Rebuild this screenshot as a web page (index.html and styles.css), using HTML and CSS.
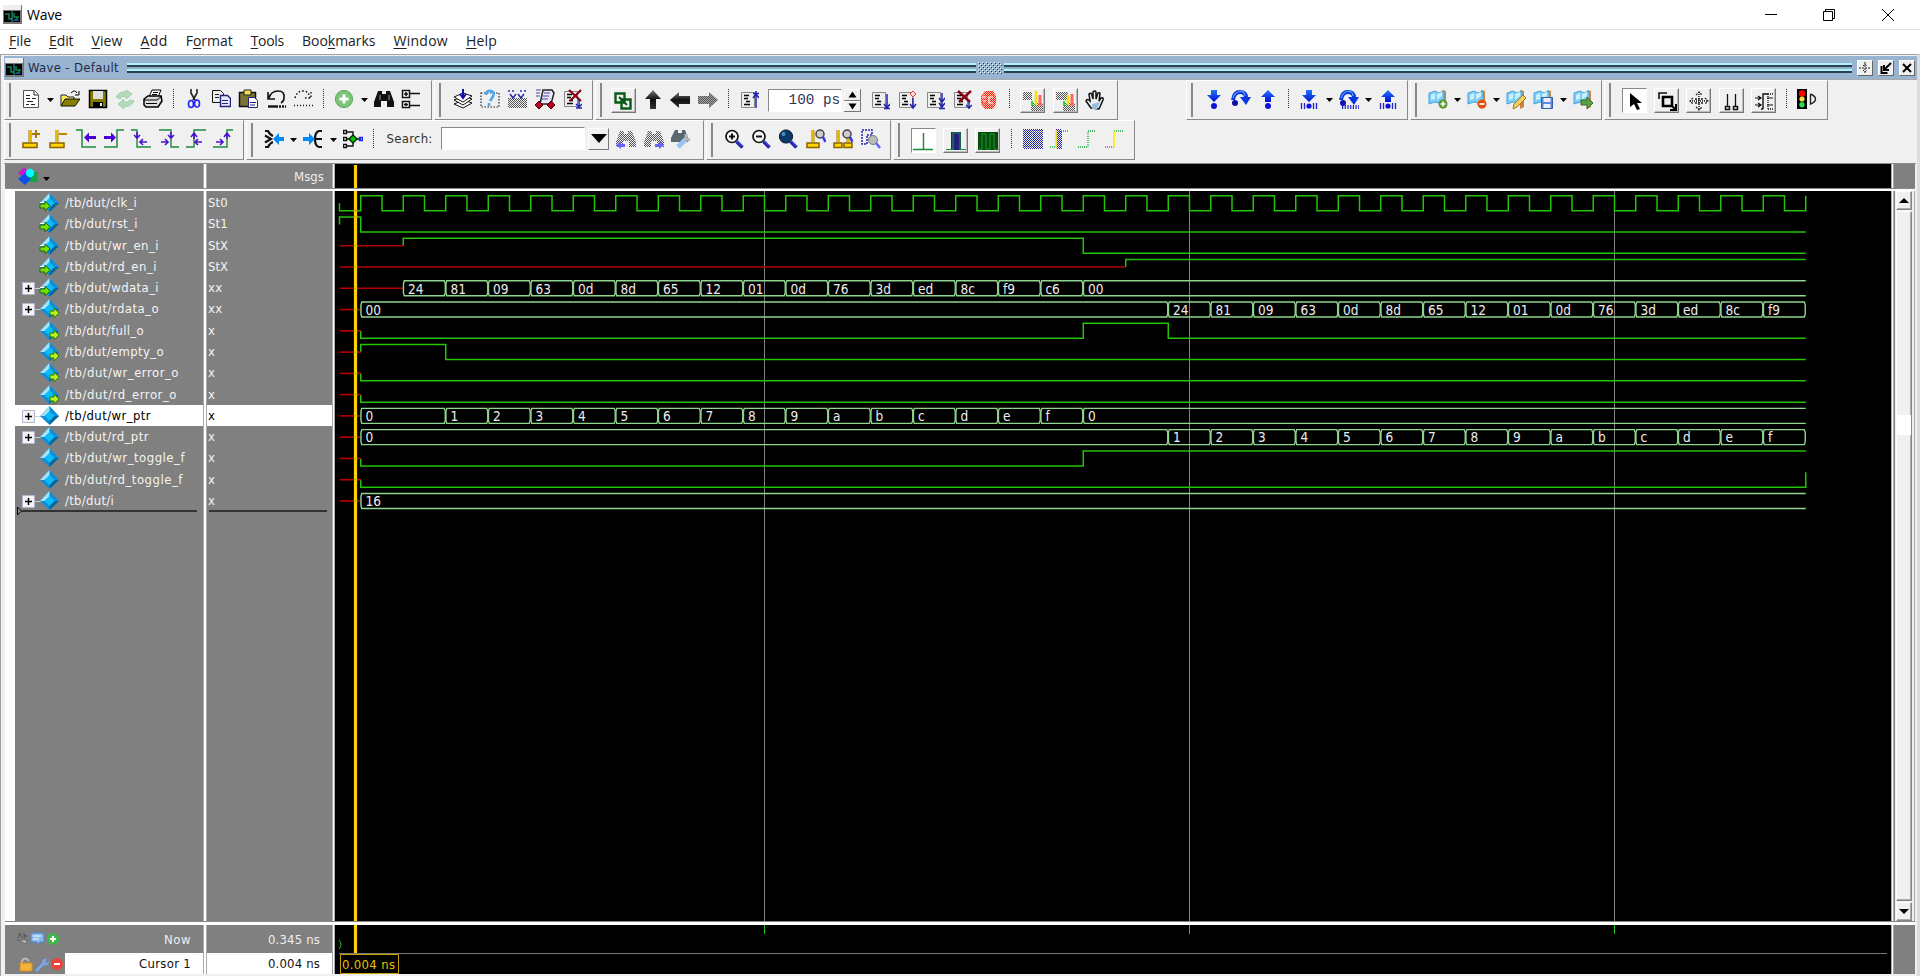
FILE: index.html
```html
<!DOCTYPE html>
<html lang="en">
<head>
<meta charset="utf-8">
<title>Wave</title>
<link rel="stylesheet" href="styles.css">
</head>
<body>
<div class="window">
  <header class="titlebar">
    <svg class="appicon" viewBox="0 0 19 19"><use href="#app"/></svg>
    <span class="fit" data-w="35">Wave</span>
    <div class="winbtns">
      <svg viewBox="0 0 14 14"><path d="M2 6.5h12"/></svg>
      <svg viewBox="0 0 14 14"><path d="M1.5 3.5h9v9h-9zM3.5 3.500v-2h9v9h-2"/></svg>
      <svg viewBox="0 0 14 14"><path d="M1 1l12 12M13 1L1 13"/></svg>
    </div>
  </header>
  <nav class="menu">
    <span class="fit" data-w="22"><u>F</u>ile</span>
    <span class="fit" data-w="24.5"><u>E</u>dit</span>
    <span class="fit" data-w="31"><u>V</u>iew</span>
    <span class="fit" data-w="27.2"><u>A</u>dd</span>
    <span class="fit" data-w="47"><span>F</span><u>o</u>rmat</span>
    <span class="fit" data-w="33.3"><u>T</u>ools</span>
    <span class="fit" data-w="73.5">Boo<u>k</u>marks</span>
    <span class="fit" data-w="54.5"><u>W</u>indow</span>
    <span class="fit" data-w="31"><u>H</u>elp</span>
  </nav>
  <main class="frame">
    <div class="panebar">
      <svg class="appicon" viewBox="0 0 19 19"><use href="#app"/></svg>
      <span class="fit tah" data-w="91">Wave - Default</span>
      <div class="rails"></div>
      <svg class="dots" viewBox="0 0 24 12"><rect width="24" height="12" fill="url(#griph)"/></svg>
      <div class="rails"></div>
      <div class="panebtns">
        <span class="pbtn"><svg viewBox="0 0 12 12"><path d="M6 0v12M0 6h12M4 4l2-2 2 2M4 8l2 2 2-2" stroke="#222" stroke-dasharray="2 1" fill="none"/></svg></span>
        <span class="pbtn"><svg viewBox="0 0 12 12"><path d="M1.500 4v7h6M11 1L5 7M4 3v5h5" stroke="#000" stroke-width="2" fill="none"/></svg></span>
        <span class="pbtn"><svg viewBox="0 0 12 12"><path d="M2 2l8 8M10 2l-8 8" stroke="#000" stroke-width="2" fill="none"/></svg></span>
      </div>
    </div>
    <div class="toolrow">
      <div class="group g1" data-items="doc v open save refresh print | cut copy paste undo redo | plus v binoc struct"></div>
      <div class="group g2" data-items="layers query reload runlog breaklist"></div>
      <div class="group g3" data-items="[link up left rightd | steptop #run listdown listdiamond listdouble listx stop | [perf [mem hand"></div>
      <div class="group g4" data-items="sin sover sout | sinb v soverb v soutb"></div>
      <div class="group g5" data-items="bkadd v bkdel v bkedit bksave v bkgo"></div>
      <div class="group g6" data-items="]pointer [zoomsel [pan [cursors [edges | traffic"></div>
    </div>
    <div class="toolrow">
      <div class="group ga" data-items="curadd curdel prevtr nexttr prevfall nextfall prevrise nextrise"></div>
      <div class="group gb" data-items="drivers v readers v expand | #search sleft sright sopt"></div>
      <div class="group gc" data-items="zin zout zfull zcur zcurs zlast"></div>
      <div class="group gd" data-items="]w1 [w2 [w3 | w4 w5 w6 w7"></div>
    </div>
    <section class="panes">
      <div class="namehead"><svg viewBox="0 0 34 20"><path d="M7 1l6 6-6 5-6-5z" fill="#c21bd0"/><path d="M11 6h10v10H11z" fill="#18a548"/><path d="M8 7l6 6-6 6-7-6z" fill="#0a50e8"/><circle cx="13" cy="7" r="4.200" fill="#0ff"/><path d="M26 11h7l-3.500 4z"/></svg></div>
      <div class="vsep"></div>
      <div class="msghead tah"><span class="fit" data-w="30">Msgs</span></div>
      <div class="vsep"></div>
      <svg class="black" viewBox="335 164 1556 24"><path d="M355.500 165v23" class="cursor"/></svg>
      <div class="vsep"></div>
      <div class="gray"></div>
      <div class="hsep"></div>
      <div class="names tah" id="names"></div>
      <div class="vsep"></div>
      <div class="values tah" id="values"></div>
      <div class="vsep"></div>
      <svg class="black" id="wave" viewBox="335 191 1556 730"></svg>
      <div class="vsep"></div>
      <div class="scroll">
        <div class="sbtn"><svg viewBox="0 0 10 6"><path d="M5 0l5 5H0z"/></svg></div>
        <div class="trough"><div class="mark"></div></div>
        <div class="sbtn"><svg viewBox="0 0 10 6"><path d="M0 0h10L5 5z"/></svg></div>
      </div>
      <div class="hsep"></div>
      <div class="foot tah">
        <div class="footrow"><svg viewBox="0 0 48 16"><path d="M2 7l2-5 2 5M8 2v5l3-2-3-1" stroke="#555" fill="none"/><path d="M1 9h11l-3 4-3-2z" fill="#bbb" stroke="#666"/><path d="M15 2h13v9h-4l-3 3v-3h-6z" fill="#8bb8ea" stroke="#4d83c4"/><path d="M17 5h8M17 8h6" stroke="#fff"/><circle cx="37" cy="8" r="6" fill="#43b649"/><path d="M37 5v6M34 8h6" stroke="#fff" stroke-width="2"/></svg><span class="fit" data-w="27">Now</span></div>
        <div class="footrow"><svg viewBox="0 0 48 16"><path d="M6 8V5q3-5 7 0" fill="none" stroke="#bbb" stroke-width="2"/><path d="M4 7h12v8H4z" fill="#f3b13e" stroke="#d58a1a"/><path d="M19 14l7-7q0-5 5-4l-2 3 2 1 2-2q0 5-5 4l-7 7z" fill="#7aa7ea"/><circle cx="41" cy="8" r="6" fill="#e8453c"/><path d="M38 8h6" stroke="#fff" stroke-width="2"/></svg><span class="cell"><span class="fit" data-w="52">Cursor 1</span></span></div>
      </div>
      <div class="vsep"></div>
      <div class="footvals tah">
        <div class="footrow"><span class="fit" data-w="52">0.345 ns</span></div>
        <div class="footrow lit"><span class="fit" data-w="52">0.004 ns</span></div>
      </div>
      <div class="vsep"></div>
      <svg class="black" viewBox="335 925 1556 49">
        <path d="M355.500 925v28" class="cursor"/>
        <path d="M339 953.500h1548" stroke="#777" fill="none"/>
        <path d="M764.500 925v9M1189.500 925v9M1614.500 925v9M339 940q4 5 0 9" stroke="#1fc31f" fill="none"/>
        <path d="M340.500 954.500h58v19h-58z" stroke="#c9a200" fill="#000"/>
        <text x="342" y="969" class="ctime" textLength="53">0.004 ns</text>
      </svg>
      <div class="vsep"></div>
      <div class="gray"></div>
    </section>
  </main>
</div>
<svg class="defs" id="defs">
  <defs>
    <pattern id="griph" width="4" height="4" patternUnits="userSpaceOnUse"><path d="M0 0h1v1h-1zM2 2h1v1h-1z" fill="#dff"/><path d="M1 1h1v1h-1zM3 3h1v1h-1z" fill="#234"/></pattern>
    <pattern id="dith" width="2" height="2" patternUnits="userSpaceOnUse"><path d="M0 0h1v1H0zM1 1h1v1H1z" fill="#555"/></pattern>
    <pattern id="dithb" width="2" height="2" patternUnits="userSpaceOnUse"><path d="M0 0h1v1H0zM1 1h1v1H1z" fill="#22229a"/></pattern>
    <pattern id="dithr" width="2" height="2" patternUnits="userSpaceOnUse"><path d="M0 0h2v2H0z" fill="#fba"/><path d="M0 0h1v1H0zM1 1h1v1H1z" fill="#f21"/></pattern>
    <linearGradient id="bl" x2="0" y2="1"><stop offset="0" stop-color="#27f"/><stop offset="1" stop-color="#01c"/></linearGradient>
    <linearGradient id="dk" x2="0" y2="1"><stop offset="0" stop-color="#777"/><stop offset=".5" stop-color="#111"/><stop offset="1" stop-color="#333"/></linearGradient>
    <symbol id="app" viewBox="0 0 19 19"><path d="M0 0h19v19H0z" fill="#777"/><path d="M0 0h18v5H0z" fill="#eee"/><path d="M1 6h16v11H1z"/><path d="M2 9h4v5h3M11 8v4h5M11 15h3v-3" stroke="#0a8a52" fill="none" stroke-width="1.500"/><path d="M9 6v11" stroke="#2aa" /><path d="M10 15.500h6" stroke="#33a"/></symbol>
  </defs>
</svg>
<script src="app.js"></script>
</body>
</html>
```
FILE: styles.css
```css
* { box-sizing: border-box; }
body { margin: 0; background: #f0f0f0; font-family: "Open Sans", "Noto Sans", sans-serif; color: #000; overflow: hidden; }
.window { width: 1920px; height: 976px; display: flex; flex-direction: column; }
.defs { position: absolute; width: 0; height: 0; }
.fit { white-space: pre; }
.tah { font-family: "DejaVu Sans Condensed", "DejaVu Sans", sans-serif; font-size: 13px; }
.titlebar { height: 30px; flex: none; background: #fff; border-bottom: 1px solid #e2e2e2; display: flex; align-items: center; padding-left: 3px; gap: 5px; font-size: 14px; }
.appicon { width: 19px; height: 19px; flex: none; }
.winbtns { margin-left: auto; display: flex; gap: 45px; padding-right: 25px; }
.winbtns svg { width: 14px; height: 14px; fill: none; stroke: #000; }
.menu { height: 24px; flex: none; background: #fff; display: flex; align-items: center; gap: 18px; padding: 0 0 2px 9px; font-size: 14px; line-height: 22px; color: #222; }
.menu u { text-underline-offset: 2px; }
.frame { flex: 1; display: flex; flex-direction: column; border: solid #a0a0a0; border-width: 1px 3px 0 1px; padding-left: 3px; border-right-color: #dcdcdc; }
.panebar { height: 24px; flex: none; margin-top: 1px; background: #99b4d1; display: flex; align-items: center; padding-left: 1px; border-bottom: 1px solid #aaa; }
.panebar .fit { margin: 0 8px 0 4px; color: #1c2c44; }
.rails { flex: 1; height: 10px; background: linear-gradient(#aef0fb 0 2px, #2c4452 2px 4px, #8db0c4 4px 6px, #aef0fb 6px 8px, #2c4452 8px); }
.dots { width: 24px; height: 12px; margin: 0 2px; }
.panebtns { display: flex; gap: 5px; margin: 0 2px 0 5px; }
.pbtn { width: 16px; height: 16px; background: #f0f0f0; border: 1px solid; border-color: #fff #666 #666 #fff; display: grid; place-items: center; }
.pbtn svg { width: 12px; height: 12px; }
.toolrow { height: 40px; flex: none; display: flex; gap: 2px; }
.group { flex: none; height: 40px; border: 1px solid; border-color: #fff #888 #888 #fff; display: flex; align-items: center; padding-bottom: 3px; background: linear-gradient(#888, #888) 4px 2px / 2px 34px no-repeat; }
.btn { width: 27.4px; flex: none; display: grid; place-items: center; }
.btn svg, .box svg { width: 20px; height: 20px; display: block; }
.drop { width: 12.4px; flex: none; display: grid; place-items: center; }
.drop svg { width: 7px; height: 4px; margin-top: 2px; }
.sep { width: 13.6px; flex: none; height: 20px; background: repeating-linear-gradient(#333 0 1px, transparent 1px 2px) center / 1px 100% no-repeat; }
.boxcell { width: 32.4px; flex: none; display: grid; place-items: center; }
.box { width: 25px; height: 25px; margin-top: 4px; border: 1px solid; border-color: #fff #777 #777 #fff; box-shadow: inset -1px -1px #bbb; display: grid; place-items: center; }
.box.down { background: #fff; border-color: #888 #fff #fff #888; box-shadow: none; }
.g1 { width: 428px; padding-left: 12px; }
.g2 { width: 159px; padding-left: 14px; }
.g3 { width: 523px; padding-left: 11px; }
.g3 .btn svg { margin-top: 2px; }
.g4 { width: 222px; padding-left: 13px; margin-left: 66px; }
.g4 .drop { width: 11.8px; }
.g5 { width: 192px; padding-left: 13px; }
.g5 .drop { width: 11.8px; }
.g6 { width: 224px; padding-left: 13px; }
.ga { width: 240px; padding-left: 13px; }
.gb { width: 458px; padding-left: 13px; }
.gc { width: 185px; padding-left: 13px; }
.gd { width: 242px; padding-left: 13px; }
.gd .sep { width: 15px; }
.runlen { display: flex; align-items: center; margin: 3px 5px 0 5.500px; }
.runbox { width: 74px; height: 23px; background: #fff; border: 1px solid; border-color: #888 #fff #fff #888; font: 14.3px/21px "Liberation Mono", monospace; text-align: right; padding-right: 1px; color: #335; white-space: pre; }
.spin { width: 17px; margin-left: 2px; }
.spin svg { width: 17px; height: 23px; display: block; }
.search { display: flex; align-items: center; padding-left: 6px; color: #333; margin-right: 3.500px; }
.searchbox { width: 144px; height: 23px; margin: 0 3px 0 8.500px; background: #fff; border: 1px solid; border-color: #888 #fff #fff #888; }
.combo { width: 21px; height: 22px; border: 1px solid; border-color: #fff #777 #777 #fff; display: grid; place-items: center; }
.combo svg { width: 16px; height: 9px; }
.panes { flex: 1; margin: 3px 1px 0 0; padding-left: 1px; border-top: 1px solid #888; display: grid; grid-template-columns: 198px 4px 125px 3px 1556px 3px 21px; grid-template-rows: 24px 3px 730px 4px 49px; background: #f0f0f0; }
.vsep { background: #fff; border-right: 1px solid #aaa; border-left: 1px solid #aaa; }
.hsep { grid-column: 1 / -1; background: #fff; border-top: 1px solid #888; }
.gray, .namehead, .msghead, .foot, .footvals { background: #808080; }
.black { background: #000; width: 1556px; height: 100%; display: block; }
.namehead { padding: 2px 0 0 12px; }
.namehead svg { width: 34px; height: 20px; }
.msghead { color: #eee; text-align: right; padding-right: 8px; line-height: 25px; }
.names { background: #808080; border-left: 10px solid #fff; padding-top: 1.500px; }
.values { background: #808080; padding-top: 1.500px; }
.row { height: 21.27px; display: flex; align-items: center; color: #f4f4f4; padding-bottom: 1px; }
.row.sel { background: #fff; color: #000; }
.names svg { width: 43px; height: 21px; margin: 0 6px 0 1px; flex: none; }
.values .row { padding-left: 1px; }
.names .insert { width: 182px; height: 10px; margin: -5px 0 0; display: block; }
.values .insert { height: 8px; border-top: 2px solid #333; margin: -1px 5px 0 2px; }
.cursor { stroke: #ffd200; stroke-width: 3.200; fill: none; }
.low { stroke: #22c404; fill: none; stroke-width: 1.500; }
.bus { stroke: #8fd48f; fill: none; stroke-width: 1.400; }
.unk { stroke: #b40000; fill: none; stroke-width: 1.600; }
.grid { stroke: #808080; fill: none; }
.val { font: 13.500px "DejaVu Sans Condensed", "DejaVu Sans", sans-serif; fill: #eee; }
.ctime { font: 13px "DejaVu Sans Condensed", "DejaVu Sans", sans-serif; fill: #e8c000; }
.foot .footrow, .footvals .footrow { display: flex; align-items: center; justify-content: flex-end; padding-right: 12px; color: #eee; height: 28px; }
.foot .footrow + .footrow, .footvals .footrow + .footrow { height: 21px; }
.foot svg { width: 48px; height: 16px; margin: 0 auto 0 11px; }
.foot .footrow + .footrow { padding-right: 0; }
.cell { width: 138px; height: 21px; background: #fff; color: #111; text-align: right; padding-right: 12px; line-height: 21px; }
.footvals .footrow.lit { background: #fff; color: #111; }
.scroll { display: flex; flex-direction: column; background: #f0f0f0; padding: 0 2px 0 1px; border-left: 1px solid #888; border-right: 1px solid #aaa; }
.sbtn { height: 19px; border: 1px solid; border-color: #fff #888 #888 #fff; box-shadow: inset -1px -1px #aaa; display: grid; place-items: center; }
.sbtn svg { width: 10px; height: 6px; }
.trough { flex: 1; border: 1px solid; border-color: #fff #888 #888 #fff; box-shadow: inset -1px -1px #aaa; margin: 1px 0; padding-top: 203px; }
.mark { height: 20px; background: #fff; }
```
FILE: app.js
```javascript
const P = (d, a = '') => `<path d="${d}" ${a}/>`;
const L = (d, c = '#000', w = 1, x = '') => P(d, `fill="none" stroke="${c}" stroke-width="${w}" ${x}`);
const page = P('M2.500 2.500h13v15h-13z', 'fill="#eee" stroke="#888"') + L('M5 5.500h5M5 8.500h4M7 11.500h4M5 14.500h6', '#000', 1.5);
const downA = 'M7 1h6v5h4l-7 7-7-7h4z', upA = 'M7 13h6V8h4l-7-7-7 7h4z';
const over = L('M2 11Q3 3 9 3T15 9', '#0636e0', 4) + L('M2 9Q4 3 9 2.500T14 7', '#6af', 1.2) + P('M9 8h11l-5 8z', 'fill="#0a38e0"') + '<circle cx="4" cy="14" r="3" fill="#11a"/>';
const flag = P('M14 1l4 1v16l-4 2z', 'fill="#c9863a"') + P('M1 4l6-2 4 2 5-2v11l-5 1-4-1-6 2z', 'fill="#7ccdf6" stroke="#48a4dc"') + P('M3 6l4-2v6l-4 1zM9 5l5-2v4l-5 4z', 'fill="#c8f0ff"');
const handle = L('M12.500 12.500l6 6', '#22a', 3.5) + L('M13 11.500l5.500 5.500', '#66f', 1);
const glass = '<circle cx="8" cy="7.500" r="6" fill="#f6f6f6" stroke="#111" stroke-width="1.700"/>' + handle;
const smallGlass = '<circle cx="14" cy="5" r="4" fill="#ccc" stroke="#444" stroke-width="1.500"/>' + L('M17 8l2.500 5', '#33e', 2.5);
const base = (x, w) => L(`M${x} 1v12`, '#a87800', 3) + L(`M${x} 1v12`, '#ffd400', 1.4) + P(`M${x - w / 2} 14h${w}v4.500h-${w}z`, 'fill="#ffd400" stroke="#8a6000" stroke-width="1.500"');
const arrL = (x, y) => L(`M${x} ${y}h7M${x + 3} ${y - 3}l-3 3 3 3`, '#4a12d0', 1.6);
const arrR = (x, y) => L(`M${x} ${y}h7M${x + 4} ${y - 3}l3 3-3 3`, '#4a12d0', 1.6);
const binoc = f => P('M4 2h4v3h4V2h4l4 11v5h-7v-6H7v6H0v-5z', `fill="${f}"`);
const G = '#1c8a3c', D = 'stroke-dasharray="1 1"';

const icons = {
  doc: P('M2.500 1.500h11l4 4v13h-15z', 'fill="#fff" stroke="#555"') + L('M13 2v4h4M5 6.500h4M5 9.500h4M11 9.500h4M6 12.500h6M5 15.500h3M10 15.500h4', '#222'),
  open: L('M11 4q4-4 6 0m2-2v4h-4') + P('M1 17V6h5l2 2h6v3', 'fill="#ffea60" stroke="#222"') + P('M1 17l4-7h15l-5 7z', 'fill="#8a8000" stroke="#111"'),
  save: P('M1.500 1.500h17v17h-17z', 'fill="#807a00" stroke="#000" stroke-width="1.500"') + P('M5 2h10v8H5z', 'fill="#ddd"') + P('M5 13h10v5H5z') + P('M12 14h2v3h-2z', 'fill="#eee"'),
  refresh: P('M1 8q4-6 10-5V1l6 4-6 5V7q-4 0-6 3zM19 12q-4 7-10 5v3l-6-5 6-5v3q4 1 6-2z', 'fill="#b4dcba" stroke="#8cc49a" stroke-width=".7"'),
  print: P('M6 8l3-7h9l-3 7z', 'fill="#fff" stroke="#000"') + P('M1 10l4-3h13l1 5-4 6H3l-2-2z', 'fill="#ddd" stroke="#000" stroke-width="1.500"') + L('M1 11h13l5-4M3 14.500h11M10 3.500h5M9 5.500h5'),
  cut: L('M7 0v4l4 7M13 0v4l-4 7', '#222', 1.6) + '<ellipse cx="7" cy="15" rx="2.500" ry="3.500" fill="none" stroke="#22f" stroke-width="1.600"/><ellipse cx="13" cy="14.500" rx="2.500" ry="3.500" fill="none" stroke="#22f" stroke-width="1.600"/>',
  copy: P('M1.500 1.500h8l3 3v9h-11z', 'fill="#eee" stroke="#111"') + P('M9.500 6.500h7l3 3v8h-10z', 'fill="#e8e8ff" stroke="#22227a" stroke-width="1.400"') + L('M4 5.500h4M4 8.500h4', '#111') + L('M11 11.500h6M11 14.500h6', '#22227a'),
  paste: P('M1.500 3.500h16v14h-16z', 'fill="#7b7432" stroke="#111" stroke-width="1.500"') + P('M6 1h7v5H6z', 'fill="#f0e050" stroke="#222"') + P('M10.500 8.500h6l3 3v7h-9z', 'fill="#fff" stroke="#22227a"') + L('M12 13.500h6M12 16h5', '#22227a'),
  undo: L('M3 9q2-7 9-7t6 7q0 3-3 5M2 3v7h7', '#111', 1.6) + L('M2 17.500h10', '#111', 2.4) + L('M13 17.500h7', '#111', 2.4, 'stroke-dasharray="2 1"'),
  redo: L('M2 9q2-7 8-7t7 7M18 3v6h-6', '#111', 1.4, 'stroke-dasharray="1.500 2"') + L('M1 16.500h19', '#111', 1.5, 'stroke-dasharray="1 2"'),
  plus: '<circle cx="10" cy="10" r="8.600" fill="#7cc67a" stroke="#5aa85a"/>' + L('M10 5.500v9M5.500 10h9', '#fff', 3),
  binoc: binoc('#111') + L('M6 6v5M15 6v5', '#999'),
  struct: P('M1.500 1.500h7v7h-7zM1.500 12.500h7v6h-7z', 'fill="#fff" stroke="#111" stroke-width="1.500"') + L('M3 5h4M5 3v4M3 15.500h4M5 14v3M9 4.500h10M9 16.500h10', '#111', 1.5),
  layers: P('M1 15l10-4 8 3-9 5z', 'fill="#fff" stroke="#111"') + P('M1 11l10-4 8 3-9 6z', 'fill="#fff" stroke="#111"') + P('M1 8l9-4 9 3-9 6z', 'fill="#fff" stroke="#111"') + L('M10 0v8M7 5l3 4 3-4', '#11a', 2),
  query: L('M1 4h18v14H1z', '#222', 1.2, 'stroke-dasharray="1.500 1.500"') + L('M6 6q0-5 5-4t1 7l-2 3M9 14v3', '#4aa8f0', 2.6),
  reload: '<rect x="1" y="9" width="19" height="10" fill="url(#dith)"/>' + L('M2 1v2M6 1v2M14 1v2M18 1v2M3 5l3 4 3-4M11 5l3 4 3-4', '#22a', 1.4),
  runlog: P('M8 1h9l2 3-3 11H5z', 'fill="#e8e8f8" stroke="#222" stroke-width="1.500"') + L('M9 4h6M8 7h6M7 10h6M1 1h5M1 4h4M1 7h4', '#44a') + P('M4 12l4 4-4 4-4-4zM16 12l4 4-4 4-4-4z', 'fill="#c00020" stroke="#400"'),
  breaklist: page + L('M7 1l12 11M19 1L8 12', '#8a0010', 2.2) + L('M17 10v9M14 15l3 3 3-3M14 19h6', '#22a', 1.4),
  link: P('M2.500 2.500h9v9h-9zM8.500 8.500h9v9h-9z', 'fill="none" stroke="#0a5a1a" stroke-width="2.400"') + L('M6 6l8 8', '#0a5a1a', 2),
  up: P('M7 19V9H2l8-9 8 9h-5v10z', 'fill="url(#dk)"'),
  left: P('M20 6H9V2L0 10l9 8v-4h11z', 'fill="url(#dk)"'),
  rightd: P('M0 6h11V2l9 8-9 8v-4H0z', 'fill="#a4a4a4"') + P('M0 6h11V2l9 8-9 8v-4H0z', 'fill="url(#dith)"'),
  steptop: page + L('M17 1v17M14 3.500h6M14 8l3-4 3 4', '#22a', 1.5),
  listdown: page + L('M17 4v14M14 14l3 4 3-4M14 18.500h6', '#22a', 1.5),
  listdiamond: page + P('M16 1l3 3-3 3-3-3z', 'fill="#fdd" stroke="#f33"') + L('M16 8v10M13 14l3 4 3-4', '#22a', 1.5),
  listdouble: page + L('M17 3v15M14 8l3 4 3-4M14 13l3 4 3-4M14 18.500h6', '#22a', 1.5),
  listx: page + L('M6 1l12 11M19 1L7 12', '#8a0010', 2.4) + L('M17 11v8M14 15l3 3 3-3', '#22a', 1.4),
  stop: P('M6 1h8l3 5v8l-3 5H6l-4-5V6z', 'fill="url(#dithr)"') + L('M3 7h4M4 11h3M14 7h-4v6h4', '#fff', 1.2),
  perf: '<rect x="0" y="1" width="9" height="8" fill="url(#dith)"/><rect x="8" y="12" width="12" height="8" fill="url(#dith)"/>' + L('M13 0v14', '#fd0', 2.5) + L('M17 4v11', '#f66', 3) + L('M9 10v5', '#2d4', 2),
  mem: '<rect x="1" y="1" width="12" height="8" fill="url(#dith)"/><rect x="8" y="12" width="12" height="8" fill="url(#dith)"/>' + L('M13 4v10', '#fd0', 2.5) + L('M17 3v12', '#f66', 3) + L('M9 10v5', '#2d4', 2),
  hand: P('M6 18L1 11q1-3 4 0L4 4q2-2 3 1l1 4V2q2-2 3 0v7l2-6q2-1 2 1l-1 7 2-3q3-1 2 2l-4 9z', 'fill="#eee" stroke="#111" stroke-width="1.500"') + P('M7 14l8-2-3 7H7z', 'fill="#9bd"'),
  sin: P(downA, 'fill="url(#bl)"') + '<circle cx="10" cy="17" r="3" fill="#11d"/>',
  sover: over,
  sout: P(upA, 'fill="url(#bl)"') + '<circle cx="10" cy="17" r="3" fill="#11d"/>',
  sinb: P(downA, 'fill="url(#bl)"') + '<circle cx="10" cy="17" r="2.600" fill="#11d"/>' + L('M2.500 14v6M5.500 14v6M14.500 14v6M17.500 14v6', '#22c', 1.3),
  soverb: over + L('M3 18h17', '#22c', 4, 'stroke-dasharray="1.200 1.500"'),
  soutb: P(upA, 'fill="url(#bl)"') + '<circle cx="10" cy="17" r="2.600" fill="#11d"/>' + L('M2.500 14v6M5.500 14v6M14.500 14v6M17.500 14v6', '#22c', 1.3),
  bkadd: flag + '<circle cx="15" cy="15" r="4.500" fill="#5a9a30"/>' + L('M15 12.500v5M12.500 15h5', '#fff', 1.7),
  bkdel: flag + '<circle cx="15" cy="15" r="4.500" fill="#e05010"/>' + L('M12.500 15h5', '#fff', 1.7),
  bkedit: flag + P('M17 6l3 3-9 9-4 2 1-5z', 'fill="#f3cf60" stroke="#a8761a"'),
  bksave: flag + P('M8.500 8.500h11v11h-11z', 'fill="#5b8ad8" stroke="#3560a8"') + P('M10.500 9h7v4h-7zM10.500 15h7v4h-7z', 'fill="#eef"'),
  bkgo: flag + P('M8 11h6V8l6 6-6 6v-4H8z', 'fill="#58a040" stroke="#386828"'),
  pointer: P('M6 2v14l4-3 3 6 3-1-3-6h5z'),
  zoomsel: L('M2 8V2h8', '#111', 1.6) + L('M6 6h9v9H6z', '#000', 2.6) + L('M14 14l4 4M13 19h6v-6', '#000', 2),
  pan: L('M10 1v18M1 10h18', '#111', 1.4, D) + L('M7 4l3-3 3 3M7 16l3 3 3-3M4 7l-3 3 3 3M16 7l3 3-3 3M6 8h8M6 12h8', '#222', 1.3, 'stroke-dasharray="2 1"'),
  cursors: L('M6.500 3v12M14.500 3v12', '#111', 1.3) + L('M4.500 15.500h4v3h-4zM12.500 15.500h4v3h-4z', '#111', 1.5),
  edges: L('M9 18V3h5M9 18H7', '#111', 1.4) + L('M14 3v15M14 18h6M14 3h6', '#111', 1.3, D) + L('M1 7h6M4 5l3 2-3 2M1 14h6M4 12l3 2-3 2M13 7h6M13 14h6', '#111', 1.2),
  traffic: P('M0 0h10v20H0z') + '<circle cx="5" cy="4.500" r="3.200" fill="red"/><circle cx="5" cy="10" r="2.600" fill="#f3e040"/><circle cx="5" cy="15.800" r="2.700" fill="#2d5"/>' + L('M13.500 5v10q5-2 5-5t-5-5', '#222', 1.4),
  curadd: base(8, 14) + L('M10 5h8M14 1v8', '#a87800', 2),
  curdel: base(8, 14) + L('M10 5h8', '#c08a00', 2),
  prevtr: L('M0 1h6v17h14', G, 1.5) + P('M8 8.500l5-5v3.500h7v3h-7v3.500z', 'fill="#4a00d8"'),
  nexttr: L('M0 18h13V1h7', G, 1.5) + P('M12 8.500l-5-5v3.500H0v3h7v3.500z', 'fill="#4a00d8"'),
  prevfall: L('M0 1h6v17h14', G, 1.4) + L('M6 3v5M3 6l3 3 3-3', '#4a12d0', 1.6) + arrL(9, 13),
  nextfall: L('M0 1h12v17h8', G, 1.4) + L('M12 3v5M9 6l3 3 3-3', '#4a12d0', 1.6) + arrR(2, 13),
  prevrise: L('M0 18h8V1h12', G, 1.4) + L('M8 4v6M5 8l3-4 3 4', '#4a12d0', 1.6) + arrL(9, 13),
  nextrise: L('M0 18h14V1h6', G, 1.4) + L('M14 4v6M11 8l3-4 3 4', '#4a12d0', 1.6) + arrR(3, 13),
  drivers: L('M1 2h3q2 4 5 5M1 18h3q2-4 5-5M1 6.500l6 3.500-6 3.500', '#111', 2.2) + P('M9 10l6-6v4h5v4h-5v4z', 'fill="#08f"'),
  readers: L('M19 2h-3q-4 1-4 8t4 8h3M19 10h-6', '#111', 2.2) + P('M12 10L6 4v4H0v4h6v4z', 'fill="#08f"'),
  expand: L('M4 3h6v4M4 17h6v-4M4 10h14', '#111', 1.4) + L('M.5 1.500h3v3h-3zM.5 8.500h3v3h-3zM.5 15.500h3v3h-3z', '#111', 1.3) + P('M10 6l4 4-4 4-4-4z', 'fill="#0c0" stroke="#030" stroke-width="1.500"') + L('M16.500 8.500h3v3h-3z', '#22f', 1.5),
  sleft: binoc('url(#dith)') + P('M0 16l5-4v3h4v3H5v2z', 'fill="#66f"'),
  sright: binoc('url(#dith)') + P('M20 16l-5-4v3h-4v3h4v2z', 'fill="#66f"'),
  sopt: P('M4 1h3v3h4V1h3l3 8v4H0V9z', 'fill="#5a6670"') + L('M7 18l8-8', '#9cc4f0', 5) + L('M15 5v5l4 1', '#b4b4b4', 3),
  zin: glass + L('M8 4.500v6M5 7.500h6', '#111', 2),
  zout: glass + L('M5 7.500h6', '#111', 2),
  zfull: '<circle cx="8" cy="7.500" r="6.600" fill="#0a3a6a" stroke="#112"/><circle cx="5.500" cy="5" r="2" fill="#4a90c0"/>' + handle,
  zcur: base(7, 12) + smallGlass,
  zcurs: base(5, 8) + base(15, 8) + smallGlass,
  zlast: L('M1 1h10v5H6v9H1z', '#22b', 1.5, 'stroke-dasharray="2 1"') + '<circle cx="12" cy="11" r="4.500" fill="#bbb" stroke="#777"/>' + L('M15 14l4 5', '#66f', 2.5),
  w1: L('M0 18.500h20M10.500 2v16', G, 1.4),
  w2: P('M5 1h10v18H5z', 'fill="#22227a"') + L('M0 18.500h7V2h7v16.500h6', G, 1.2),
  w3: P('M0 1h20v18H0z', 'fill="#064d0c"') + L('M1 18h3V3h4v15h4V3h4v15h3', '#1a9a2a'),
  w4: '<rect width="20" height="20" fill="url(#dithb)"/>' + L('M0 18h10V2h10', '#3b8', 1, D),
  w5: '<rect x="6" width="6" height="20" fill="url(#dithb)"/>' + L('M6 1v18', '#fe0', 1.6) + L('M0 18h6M9 2h9', '#2a4', 1.4, D),
  w6: L('M0 18h10V2h8', '#2a4', 1.3, D),
  w7: L('M0 18h9M9 2h9', '#2a4', 1.3, D) + L('M9 2v16', '#fe0', 1.6)
};

const svg = n => `<svg viewBox="0 0 20 20">${icons[n]}</svg>`;
const special = {
  '#run': '<div class="runlen"><div class="runbox">100 ps</div><div class="spin"><svg viewBox="0 0 17 23"><path d="M.5 11V.5H16M.5 22V12.500H16" stroke="#fff" fill="none"/><path d="M16.500 0v11.500H0M16.500 12v10.500H0" stroke="#777" fill="none"/><path d="M8.500 2.500l4 6h-8zM4.500 14.500h8l-4 6z"/></svg></div></div>',
  '#search': '<div class="search tah"><span class="fit" data-w="46">Search:</span><div class="searchbox"></div><div class="combo"><svg viewBox="0 0 16 9"><path d="M0 0h16L8 9z"/></svg></div></div>'
};
document.querySelectorAll('.group').forEach(g => {
  g.innerHTML = g.dataset.items.split(' ').map(t => {
    if (t === '|') return '<span class="sep"></span>';
    if (t === 'v') return '<span class="drop"><svg viewBox="0 0 7 4"><path d="M0 0h7L3.500 4z"/></svg></span>';
    if (special[t]) return special[t];
    if (t[0] === '[') return `<span class="boxcell"><span class="box">${svg(t.slice(1))}</span></span>`;
    if (t[0] === ']') return `<span class="boxcell"><span class="box down">${svg(t.slice(1))}</span></span>`;
    return `<span class="btn">${svg(t)}</span>`;
  }).join('');
});

// Signals: name, value, drawn width, expandable, direction
const signals = [
  ['clk_i', 'St0', 72, 0, 'i'], ['rst_i', 'St1', 73, 0, 'i'], ['wr_en_i', 'StX', 94, 0, 'i'], ['rd_en_i', 'StX', 92, 0, 'i'],
  ['wdata_i', 'xx', 94, 1, 'i'], ['rdata_o', 'xx', 94, 1, 'o'], ['full_o', 'x', 79, 0, 'o'], ['empty_o', 'x', 99, 0, 'o'],
  ['wr_error_o', 'x', 114, 0, 'o'], ['rd_error_o', 'x', 112, 0, 'o'], ['wr_ptr', 'x', 86, 1, ''], ['rd_ptr', 'x', 84, 1, ''],
  ['wr_toggle_f', 'x', 120, 0, ''], ['rd_toggle_f', 'x', 118, 0, ''], ['i', 'x', 49, 1, '']
];
const plusBox = '<path d="M6.500 5.500h12v12h-12z" fill="#f4f4f8" stroke="#b4b4cc"/><path d="M9 11.500h7M12.500 8v7" stroke="#000" stroke-width="1.500"/><path d="M19 11.500h7" stroke="#ccd"/>';
const gem = '<path d="M33.500 1l9.500 10-9.500 9-9.500-9z" fill="#0d8fd8"/><path d="M33.500 1v6l-5 4h-4.500z" fill="#a6e2fa"/><path d="M43 11l-9.500 9v-5l5-4z" fill="#06679c"/><path d="M33.500 6l5 5-5 5-5-5z" fill="#0abcf8"/>';
const dir = {
  i: '<path d="M24 12h5V9l5 5-5 5v-3h-5z" fill="#7be000" stroke="#1c6a10"/><path d="M24 10.500h4" stroke="#fff"/>',
  o: '<path d="M34 13h4v-3l5 5-5 5v-3h-4z" fill="#b8f020" stroke="#2c7a10"/>', '': ''
};
document.getElementById('names').innerHTML = signals.map(([n, , w, e, d]) =>
  `<div class="row${n === 'wr_ptr' ? ' sel' : ''}"><svg viewBox="0 0 43 21">${e ? plusBox : ''}${gem}${dir[d]}</svg><span class="fit" data-w="${w}">/tb/dut/${n}</span></div>`).join('') +
  '<svg class="insert" viewBox="0 0 182 10"><path d="M2.500 1v8l4-4z" fill="#888" stroke="#000"/><path d="M6 5h176" stroke="#333" stroke-width="2"/></svg>';
document.getElementById('values').innerHTML = signals.map(([n, v]) =>
  `<div class="row${n === 'wr_ptr' ? ' sel' : ''}"><span class="fit" data-w="${v.length === 3 ? 20 : v.length * 7.2}">${v}</span></div>`).join('') + '<div class="insert"></div>';

// Waveforms: one picosecond is 4.25px, time zero at 339.5
const X = t => 339.5 + t * 4.25, END = 345, hi = k => 195.7 + 21.27 * k, lo = k => hi(k) + 15, mid = k => hi(k) + 7.5;
let out = '';
[100, 200, 300].forEach(t => out += `<path class="grid" d="M${X(t)} 191v730"/>`);
const unk = (k, t) => out += `<path class="unk" d="M${X(0)} ${mid(k)}H${X(t)}"/>`;
function bit(k, start, level, edges) {
  const y = l => l ? hi(k) : lo(k);
  let d = `M${X(start)} ${mid(k)}V${y(level)}`;
  edges.forEach(t => { d += `H${X(t)}`; level = 1 - level; d += `V${y(level)}`; });
  out += `<path class="low" d="${d}H${X(END)}"/>`;
  if (start > 0) unk(k, start);
}
function bus(k, start, vals, endMark) {
  unk(k, start);
  vals.forEach(([t, v], i) => {
    const a = X(t), last = i + 1 === vals.length, b = X(last ? END : vals[i + 1][0]);
    const left = `h-1l-.8 3v9l.8 3h1`;
    if (last && !endMark) out += `<path class="bus" d="M${b} ${hi(k)}H${a + 2}${left}H${b}"/>`;
    else out += `<path class="bus" d="M${b - 1.5} ${hi(k)}H${a + 2}${left}H${b - 1.5}l1-3v-9z"/>`;
    out += `<text class="val" x="${a + 4.7}" y="${mid(k) + 5.3}">${v}</text>`;
  });
}
const data = '24 81 09 63 0d 8d 65 12 01 0d 76 3d ed 8c f9 c6'.split(' ');
const clk = []; for (let t = 5; t <= END; t += 5) clk.push(t);
bit(0, 0, 0, clk);
bit(1, 0, 1, [5]);
bit(2, 15, 1, [175]);
bit(3, 185, 1, []);
bus(4, 15, data.map((v, i) => [15 + 10 * i, v]).concat([[175, '00']]));
bus(5, 5, [[5, '00']].concat(data.slice(0, 15).map((v, i) => [195 + 10 * i, v])), true);
bit(6, 5, 0, [175, 195]);
bit(7, 5, 1, [25]);
bit(8, 5, 0, []);
bit(9, 5, 0, []);
const hex = '123456789abcdef'.split('');
bus(10, 5, [[5, '0']].concat(hex.map((v, i) => [25 + 10 * i, v]), [[175, '0']]));
bus(11, 5, [[5, '0']].concat(hex.map((v, i) => [195 + 10 * i, v])), true);
bit(12, 5, 0, [175]);
bit(13, 5, 0, [345]);
bus(14, 5, [[5, '16']]);
out += '<path class="cursor" d="M355.500 191v730"/>';
signals.forEach((s, k) => {
  const y = k === 0 ? lo(0) : k === 1 ? hi(1) : mid(k);
  out += `<path d="M354 ${y}h3.500" stroke="${k < 2 ? '#e08020' : '#8ac800'}"/>`;
});
document.getElementById('wave').innerHTML = out;

// Spread each label over its set width
document.querySelectorAll('.fit').forEach(e => {
  const n = e.textContent.length;
  e.style.letterSpacing = (e.dataset.w - e.getBoundingClientRect().width) / n + 'px';
  e.style.width = e.dataset.w + 'px';
});
```
